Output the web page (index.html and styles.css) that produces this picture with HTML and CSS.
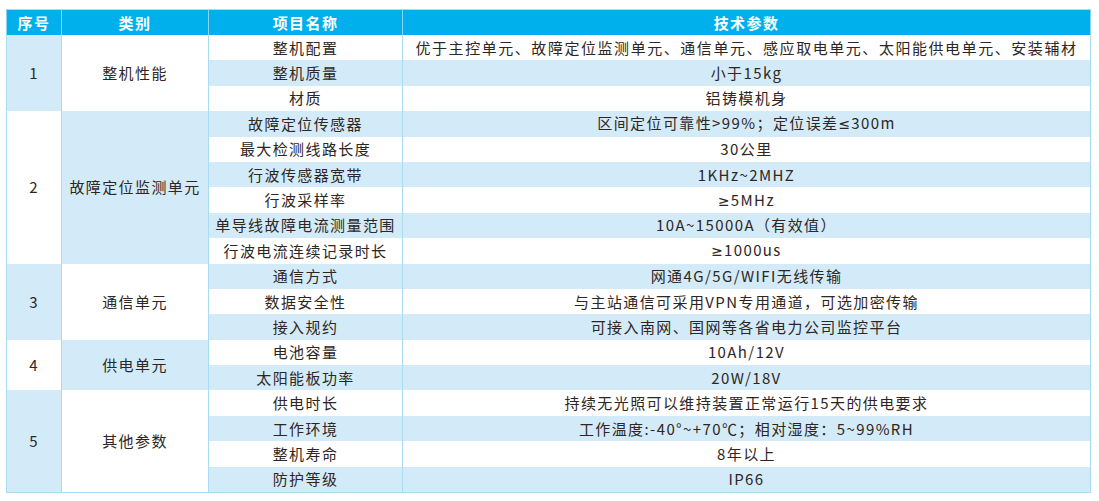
FILE: index.html
```html
<!DOCTYPE html>
<html lang="zh">
<head>
<meta charset="utf-8">
<title>技术参数</title>
<link rel="stylesheet" href="styles.css">
</head>
<body>
<table class="spec">
  <colgroup>
    <col class="c1"><col class="c2"><col class="c3"><col class="c4">
  </colgroup>
  <thead>
    <tr><th>序号</th><th>类别</th><th>项目名称</th><th>技术参数</th></tr>
  </thead>
  <tbody>
    <tr><td rowspan="3" class="cb">1</td><td rowspan="3" class="cw">整机性能</td><td>整机配置</td><td class="long">优于主控单元、故障定位监测单元、通信单元、感应取电单元、太阳能供电单元、安装辅材</td></tr>
    <tr class="b"><td>整机质量</td><td>小于15kg</td></tr>
    <tr><td>材质</td><td>铝铸模机身</td></tr>
    <tr class="b"><td rowspan="6" class="cw">2</td><td rowspan="6" class="cb">故障定位监测单元</td><td>故障定位传感器</td><td>区间定位可靠性&gt;99%；定位误差<span class="sym">≤</span>300m</td></tr>
    <tr><td>最大检测线路长度</td><td>30公里</td></tr>
    <tr class="b"><td>行波传感器宽带</td><td>1KHz~2MHZ</td></tr>
    <tr><td>行波采样率</td><td><span class="sym">≥</span>5MHz</td></tr>
    <tr class="b"><td>单导线故障电流测量范围</td><td>10A~15000A（有效值）</td></tr>
    <tr><td>行波电流连续记录时长</td><td><span class="sym">≥</span>1000us</td></tr>
    <tr class="b"><td rowspan="3" class="cb">3</td><td rowspan="3" class="cw">通信单元</td><td>通信方式</td><td>网通4G/5G/WIFI无线传输</td></tr>
    <tr><td>数据安全性</td><td>与主站通信可采用VPN专用通道，可选加密传输</td></tr>
    <tr class="b"><td>接入规约</td><td>可接入南网、国网等各省电力公司监控平台</td></tr>
    <tr><td rowspan="2" class="cw">4</td><td rowspan="2" class="cb">供电单元</td><td>电池容量</td><td>10Ah/12V</td></tr>
    <tr class="b"><td>太阳能板功率</td><td>20W/18V</td></tr>
    <tr><td rowspan="4" class="cb">5</td><td rowspan="4" class="cw">其他参数</td><td>供电时长</td><td>持续无光照可以维持装置正常运行15天的供电要求</td></tr>
    <tr class="b"><td>工作环境</td><td>工作温度:-40°~+70℃；相对湿度：5~99%RH</td></tr>
    <tr><td>整机寿命</td><td>8年以上</td></tr>
    <tr class="b"><td>防护等级</td><td>IP66</td></tr>
  </tbody>
</table>
</body>
</html>
```
FILE: styles.css
```css
html, body {
  margin: 0;
  padding: 0;
  background: #ffffff;
}
body {
  padding: 9px 0 0 6px;
  font-family: "Noto Sans CJK SC", "Noto Sans", sans-serif;
}
.spec {
  border-collapse: collapse;
  width: 1085px;
  table-layout: fixed;
  border: 1px solid #a9dbf3;
  color: #2f2623;
  font-size: 15px;
  letter-spacing: 1.4px;
}
.c1 { width: 55px; }
.c2 { width: 147px; }
.c3 { width: 194px; }
.c4 { width: auto; }
.spec th,
.spec td {
  border-left: 1px solid #a9dbf3;
  border-right: 1px solid #a9dbf3;
  padding: 0;
  text-align: center;
  vertical-align: middle;
  white-space: nowrap;
  line-height: 18px;
}
.spec th {
  background: #00b0ec;
  color: #ffffff;
  font-weight: bold;
  height: 25px;
  border-color: #8fd3f2;
}
.spec tbody tr {
  height: 25.4px;
}
.spec tbody tr td {
  background: #ffffff;
}
.spec tbody tr.b td {
  background: #d3ebf8;
}
.spec tbody tr td.cb {
  background: #d3ebf8;
}
.spec tbody tr td.cw {
  background: #ffffff;
}
.spec td.long {
  letter-spacing: 1.55px;
}
.sym {
  font-family: "DejaVu Sans", sans-serif;
  font-size: 14px;
  letter-spacing: 1px;
}
```
